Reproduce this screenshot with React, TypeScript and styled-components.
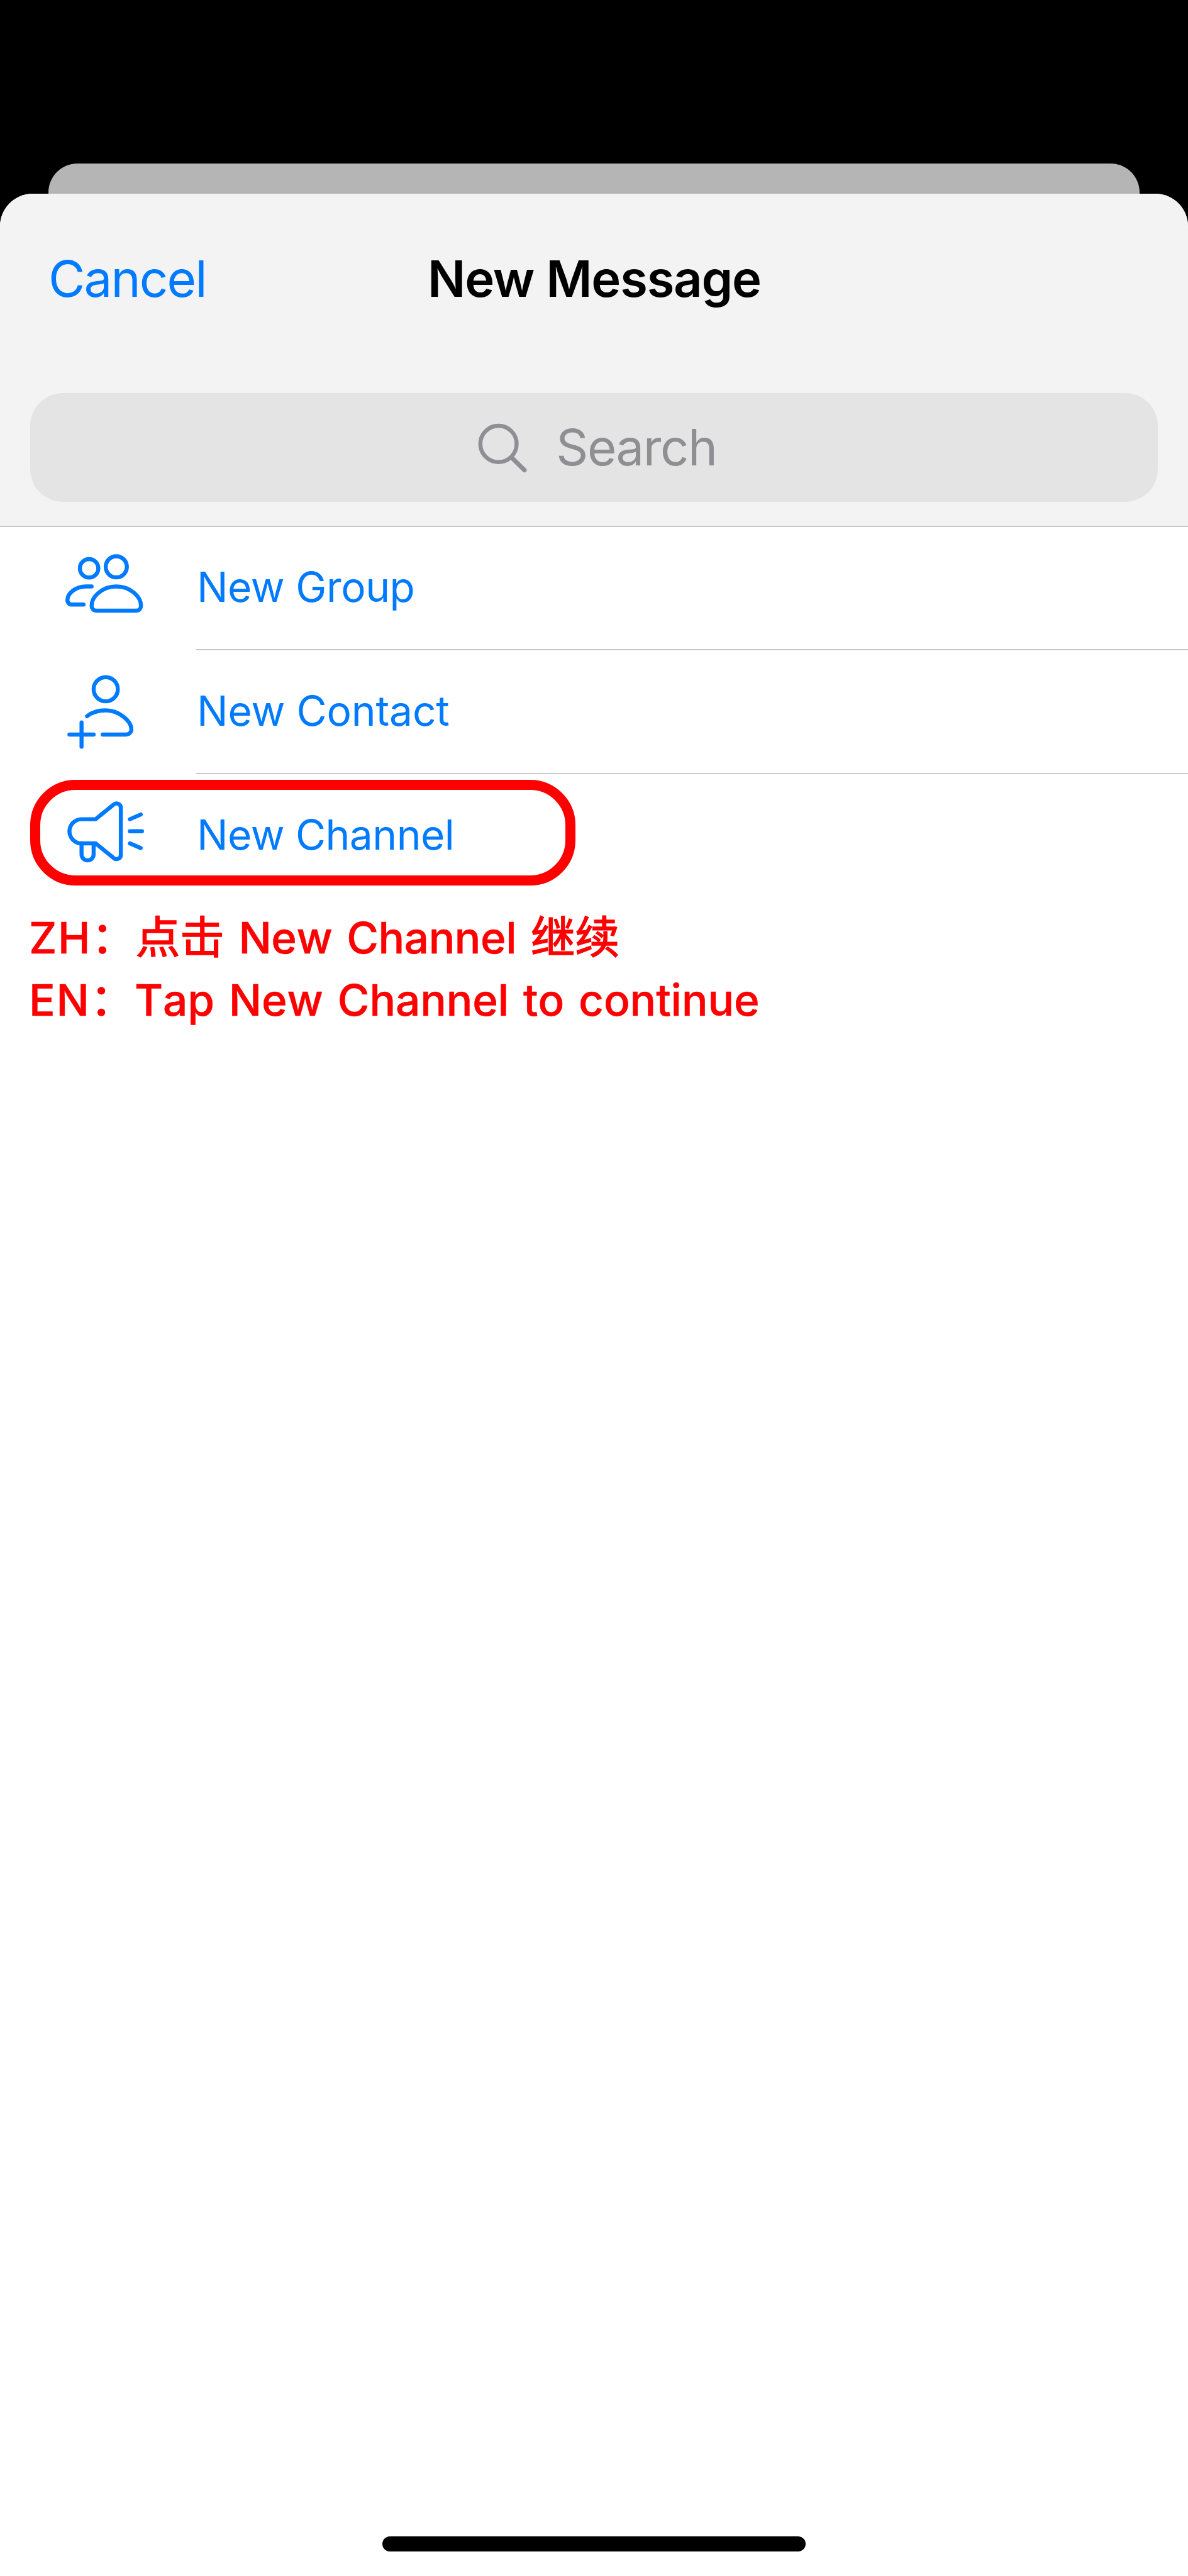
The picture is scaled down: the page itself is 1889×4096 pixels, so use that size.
import React from 'react';
import styled, { createGlobalStyle } from 'styled-components';

const BLUE = '#007aff';
const GREY = '#8e8e93';
const LINE = '#c8c7cc';
const RED = '#ff0000';

const GlobalStyle = createGlobalStyle`
  * { box-sizing: border-box; }
  html, body { margin: 0; padding: 0; background: #000; }
  body {
    font-family: Inter, "Noto Sans CJK SC", sans-serif;
    font-kerning: normal;
  }
`;

const Screen = styled.div`
  display: flex;
  flex-direction: column;
  width: 1889px;
  height: 4096px;
  padding-top: 260px;
  background: #000;
  overflow: hidden;
`;

const CardBehind = styled.div`
  flex: none;
  height: 48px;
  margin: 0 77px;
  border-radius: 46px 46px 0 0;
  background: #b5b5b5;
`;

const Sheet = styled.main`
  flex: 1;
  display: flex;
  flex-direction: column;
  border-radius: 52px 52px 0 0;
  background: #fff;
  overflow: hidden;
`;

const Header = styled.header`
  flex: none;
  height: 530px;
  padding: 0 48px;
  background: #f3f3f3;
  border-bottom: 2px solid ${LINE};
`;

const NavBar = styled.div`
  display: grid;
  grid-template-columns: 1fr auto 1fr;
  align-items: center;
  height: 269px;
  padding-left: 29px;
`;

const CancelButton = styled.button`
  justify-self: start;
  padding: 0;
  border: 0;
  background: none;
  color: ${BLUE};
  font: 400 79.9px/96px Inter, sans-serif;
  letter-spacing: -1.9px;
`;

const Title = styled.h1`
  margin: 0 28px 0 0;
  font-size: 79.5px;
  line-height: 96px;
  font-weight: 600;
  letter-spacing: -1.2px;
  color: #000;
  white-space: nowrap;
`;

const SearchField = styled.div`
  display: flex;
  align-items: center;
  justify-content: center;
  gap: 42.5px;
  height: 173px;
  margin-top: 48px;
  padding: 0 0 1px 9px;
  border-radius: 52px;
  background: #e4e4e4;
  color: ${GREY};
  font-size: 79.6px;
  line-height: 96px;
  letter-spacing: -1.5px;
`;

const SearchIcon = styled.svg`
  flex: none;
  width: 83.3px;
  height: 83.3px;
  fill: none;
  stroke: ${GREY};
  stroke-width: 8;
  stroke-linecap: round;
`;

const ActionList = styled.ul`
  flex: none;
  margin: 0;
  padding: 0;
  list-style: none;
`;

const ActionRow = styled.li<{ $height: number }>`
  position: relative;
  display: flex;
  height: ${(p) => p.$height}px;
  padding-left: 80px;
`;

const ActionIcon = styled.svg`
  flex: none;
  width: 176.2px;
  height: 160.2px;
  margin: 16px 56px 0 0;
  fill: none;
  stroke: ${BLUE};
  stroke-width: 8;
  stroke-linecap: round;
  stroke-linejoin: round;
`;

const ActionLabel = styled.span<{ $divided: boolean; $tracking: number }>`
  flex: 1;
  display: flex;
  align-items: center;
  padding: 0 0 4px 0.8px;
  border-bottom: ${(p) => (p.$divided ? `2px solid ${LINE}` : '0')};
  color: ${BLUE};
  font-size: 65.8px;
  line-height: 80px;
  letter-spacing: ${(p) => p.$tracking}px;
`;

const Highlight = styled.div`
  position: absolute;
  top: 9px;
  left: 48px;
  width: 867px;
  height: 168px;
  border: 16px solid ${RED};
  border-radius: 72px;
`;

const Notes = styled.div`
  flex: none;
  margin: 15.7px 0 0 46px;
  color: ${RED};
  font-size: 69.2px;
  line-height: 99.4px;
  font-weight: 500;
  font-kerning: none;
  word-spacing: 4.6px;
  -webkit-text-stroke: 0.5px ${RED};
`;

const Note = styled.p<{ $tracking: number }>`
  margin: 0;
  letter-spacing: ${(p) => p.$tracking}px;
  white-space: nowrap;
`;

const Tag = styled.span`
  letter-spacing: 1.7px;
`;

const Han = styled.span`
  font-family: "Noto Sans CJK SC", sans-serif;
  font-size: 70.5px;
  line-height: 0;
  font-weight: 400;
  letter-spacing: 0;
  -webkit-text-stroke: 1.6px ${RED};
`;

const HomeIndicator = styled.div`
  flex: none;
  width: 673px;
  height: 24px;
  margin: auto auto 39px;
  border-radius: 12px;
  background: #000;
`;

type Action = {
  label: string;
  viewBox: string;
  height: number;
  tracking: number;
  divided: boolean;
  highlighted?: boolean;
  drawing: React.ReactNode;
};

const actions: Action[] = [
  {
    label: 'New Group',
    viewBox: '0 -4 220 200',
    height: 196,
    tracking: -0.45,
    divided: true,
    drawing: (
      <>
        <circle cx="77" cy="58" r="18.3" />
        <circle cx="131" cy="55" r="21" />
        <path d="M82 94H71C50 94 34 108 34 121C34 126.500 37.500 130 43 130H66" />
        <path d="M131 94C160 94 180 115 180 132C180 138 176.500 142 171 142H91C85.500 142 82 138 82 132C82 115 102 94 131 94Z" />
      </>
    ),
  },
  {
    label: 'New Contact',
    viewBox: '0 0.7 220 200',
    height: 197,
    tracking: -0.15,
    divided: true,
    drawing: (
      <>
        <circle cx="110" cy="58" r="24" />
        <path d="M73 111.500C82.500 104 95 100 110 100C135 100 161 120 161 138C161 143.500 156 148 149.500 148H104" />
        <path d="M62 124V172M38 148H86" />
      </>
    ),
  },
  {
    label: 'New Channel',
    viewBox: '0 -3.4 220 200',
    height: 195,
    tracking: -0.53,
    divided: false,
    highlighted: true,
    drawing: (
      <>
        <path d="M62 66H90L125 37.500C131 32 140 35.500 140 43V137C140 144.500 131 148 125 142.500L90 114H62A24 24 0 0 1 62 66Z" />
        <path d="M62 114V135.700a12 12 0 0 0 24 0V114" />
        <path d="M158 66L179.500 56.700M158 90H182M158 114L179.500 123.300" />
      </>
    ),
  },
];

export default function App() {
  return (
    <>
      <GlobalStyle />
      <Screen>
        <CardBehind />
        <Sheet>
          <Header>
            <NavBar>
              <CancelButton>Cancel</CancelButton>
              <Title>New Message</Title>
            </NavBar>
            <SearchField>
              <SearchIcon viewBox="948 836 104 104" aria-hidden="true">
                <circle cx="990" cy="882" r="36" />
                <path d="M1017 910L1041.500 934" strokeWidth="9" />
              </SearchIcon>
              <span>Search</span>
            </SearchField>
          </Header>
          <ActionList>
            {actions.map((a) => (
              <ActionRow key={a.label} $height={a.height}>
                <ActionIcon viewBox={a.viewBox} aria-hidden="true">
                  {a.drawing}
                </ActionIcon>
                <ActionLabel $divided={a.divided} $tracking={a.tracking}>
                  {a.label}
                </ActionLabel>
                {a.highlighted && <Highlight />}
              </ActionRow>
            ))}
          </ActionList>
          <Notes>
            <Note $tracking={-0.4}>
              <Tag>ZH</Tag>
              <Han>：点击</Han> New Channel <Han>继续</Han>
            </Note>
            <Note $tracking={-0.1}>
              <Tag>EN</Tag>
              <Han>：</Han>Tap New Channel to continue
            </Note>
          </Notes>
          <HomeIndicator />
        </Sheet>
      </Screen>
    </>
  );
}
